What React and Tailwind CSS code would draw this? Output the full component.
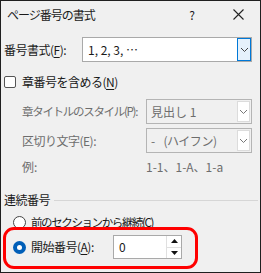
import React from "react";

const font = { fontFamily: '"Noto Sans CJK JP", "Noto Sans", sans-serif' };

function Chevron({ color = "#333" }) {
  return (
    <svg width="9" height="6" viewBox="0 0 9 6">
      <polyline points="1,1 4.5,4.5 8,1" fill="none" stroke={color} strokeWidth="1" />
    </svg>
  );
}

export default function App() {
  return (
    <div
      className="relative w-[261px] h-[273px] border border-[#1f1f1f] bg-[#f0f0f0] text-[12px] text-[#1a1a1a] leading-none overflow-hidden whitespace-nowrap"
      style={font}
    >
      {/* title bar */}
      <div className="h-[27px] flex items-center pl-[6px]">
        <span className="text-[12px] tracking-[-1px]">ページ番号の書式</span>
        <span className="ml-auto mr-[38px] text-[12px]">?</span>
        <svg width="11" height="11" viewBox="0 0 11 11" className="mr-[16px]">
          <path d="M0.5 0.5 L10.5 10.5 M10.5 0.5 L0.5 10.5" stroke="#222" strokeWidth="1.1" />
        </svg>
      </div>

      {/* number format */}
      <div className="flex items-center mt-[9px] pl-[3px] pr-[8px]">
        <span className="w-[78px] tracking-[-0.5px]">
          番号書式(<span className="underline underline-offset-2">F</span>):
        </span>
        <div className="flex-1 h-[25px] flex items-stretch bg-white border border-[#a9a9a9]">
          <span className="flex-1 flex items-center pl-[5px]">1, 2, 3, …</span>
          <div className="w-[14px] flex items-center justify-center bg-[#e5f1fb] border border-[#0078d7]">
            <Chevron color="#444" />
          </div>
        </div>
      </div>

      {/* chapter checkbox */}
      <div className="flex items-center mt-[14px] pl-[3px]">
        <div className="w-[12px] h-[12px] rounded-[2px] border border-[#555] bg-white" />
        <span className="ml-[6px] tracking-[-0.5px]">
          章番号を含める(<span className="underline underline-offset-2">N</span>)
        </span>
      </div>

      {/* chapter style */}
      <div className="flex items-center mt-[11px] pl-[21px] pr-[8px] text-[#6d6d6d]">
        <span className="w-[124px] text-[11.5px] tracking-[-1.3px]">章タイトルのスタイル(P):</span>
        <div className="flex-1 h-[25px] flex items-stretch border border-[#b4b4b4]">
          <span className="flex-1 flex items-center pl-[4px]">見出し 1</span>
          <div className="w-[13px] my-[1px] mr-[1px] flex items-center justify-center bg-white border border-[#dcdcdc]">
            <Chevron color="#777" />
          </div>
        </div>
      </div>

      {/* separator */}
      <div className="flex items-center mt-[4px] pl-[21px] pr-[8px] text-[#6d6d6d]">
        <span className="w-[124px] tracking-[-0.5px]">区切り文字(E):</span>
        <div className="flex-1 h-[25px] flex items-stretch border border-[#b4b4b4]">
          <span className="flex-1 flex items-center pl-[4px] tracking-[-0.5px]">-&nbsp;&nbsp;&nbsp;&nbsp;(ハイフン)</span>
          <div className="w-[13px] my-[1px] mr-[1px] flex items-center justify-center bg-white border border-[#dcdcdc]">
            <Chevron color="#777" />
          </div>
        </div>
      </div>

      {/* example */}
      <div className="flex items-center mt-[7px] h-[14px] pl-[21px] text-[#6d6d6d]">
        <span className="w-[124px]">例:</span>
        <span>1-1、1-A、1-a</span>
      </div>

      {/* group header */}
      <div className="flex items-center mt-[20px] pl-[3px] pr-[2px]">
        <span className="tracking-[-0.5px]">連続番号</span>
        <div className="flex-1 h-px bg-[#d6d6d6] ml-[4px]" />
      </div>

      {/* radio continue */}
      <div className="flex items-center mt-[10px] pl-[12px]">
        <div className="w-[13px] h-[13px] rounded-full border border-[#444] bg-white" />
        <span className="ml-[5px] text-[11.5px] tracking-[-1.4px]">前のセクションから継続(C)</span>
      </div>

      {/* radio start */}
      <div className="flex items-center mt-[6px] pl-[12px]">
        <div className="w-[13px] h-[13px] rounded-full bg-[#005fb8] flex items-center justify-center">
          <div className="w-[5px] h-[5px] rounded-full bg-white" />
        </div>
        <span className="ml-[5px] w-[82px] tracking-[-0.5px]">
          開始番号(<span className="underline underline-offset-2">A</span>):
        </span>
        <div className="w-[69px] h-[24px] flex items-stretch bg-white border border-[#a9a9a9]">
          <span className="flex-1 flex items-center pl-[5px]">0</span>
          <div className="w-[15px] flex flex-col border-l border-[#e0e0e0]">
            <div className="flex-1 flex items-center justify-center border-b border-[#e0e0e0]">
              <svg width="7" height="4" viewBox="0 0 7 4"><polygon points="0,4 3.5,0 7,4" fill="#111" /></svg>
            </div>
            <div className="flex-1 flex items-center justify-center">
              <svg width="7" height="4" viewBox="0 0 7 4"><polygon points="0,0 3.5,4 7,0" fill="#111" /></svg>
            </div>
          </div>
        </div>
      </div>

      {/* red annotation */}
      <div className="absolute left-[2px] top-[226px] w-[195px] h-[42px] border-[3px] border-[#ff0000] rounded-[11px] pointer-events-none" />
    </div>
  );
}
